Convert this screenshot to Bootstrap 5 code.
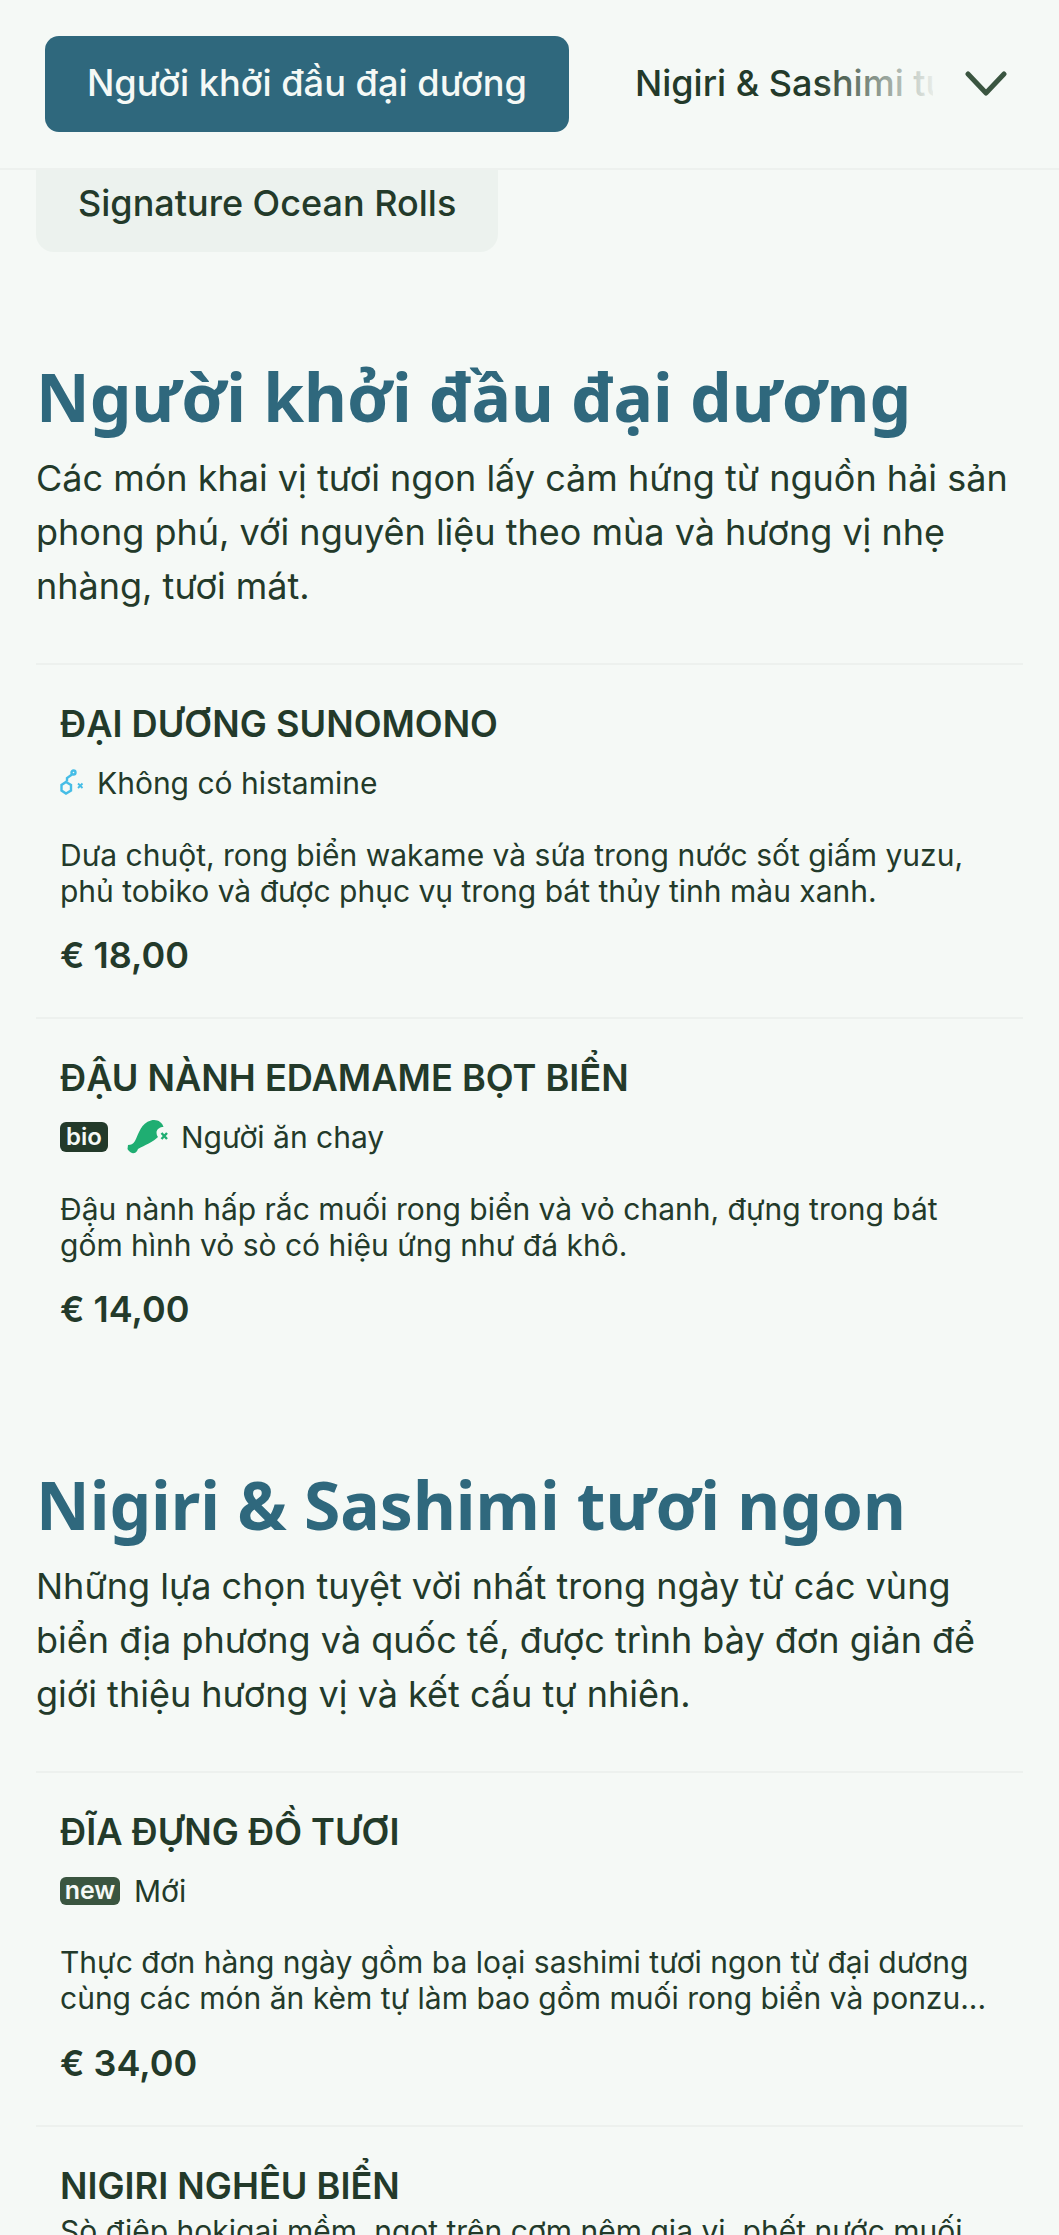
<!doctype html>
<html lang="vi">
<head>
<meta charset="utf-8">
<meta name="viewport" content="width=device-width, initial-scale=1">
<link href="https://cdn.jsdelivr.net/npm/bootstrap@5.3.0/dist/css/bootstrap.min.css" rel="stylesheet">
<style>
html,body{height:100%;overflow:hidden}
body{background:#f5f9f6;color:#233a2a;font-family:Inter,"Noto Sans",sans-serif}
.topbar{height:170px;border-bottom:2px solid #edf1ee;padding:36px 0 0 45px}
.tab-on{background:#2f687d;color:#f5f9f6;border:0;border-radius:14px;height:96px;width:524px;font-size:36.2px;font-weight:500;padding:0 0 2px;white-space:nowrap;flex:none}
.tab-wrap{width:298px;overflow:hidden;white-space:nowrap;font-size:36px;font-weight:500;line-height:94px;margin-left:66px;flex:none}
.tab-fade{top:36px;left:815px;width:120px;height:96px;background:linear-gradient(90deg,rgba(245,249,246,0),rgba(245,249,246,.95))}
.chev{margin-left:32px;margin-top:34px;flex:none}
.tab-off{background:#ecf2ee;width:462px;height:82px;margin-left:36px;border-radius:0 0 18px 18px;font-size:36px;font-weight:500;line-height:66px;padding-left:42px}
.sect{padding:0 36px}
.sect-first{margin-top:96px}
.sect-title{font-family:"Noto Sans",sans-serif;font-weight:700;font-size:66px;line-height:96px;color:#2f687d;margin:0 0 7px}
.sect-text{font-size:36px;line-height:54px;margin:0 0 50px}
.dish{border-top:2px solid #edf1ee;padding:37px 24px 0}
.dish-name{font-size:36.2px;font-weight:600;line-height:44px;margin:0;text-transform:uppercase}
.tags{height:40px;margin-top:17px;font-size:30px;line-height:40px}
.tag-dark{background:#233a2a;color:#f5f9f6;font-size:24px;font-weight:600;line-height:29px;border-radius:6px;padding:0 6px;height:30px}
.tag-new{background:#3a5540;height:28px;line-height:27px;width:60px;text-align:center;padding:0;margin-right:14px;font-size:25px}
.dish-text{font-size:30px;line-height:36px;margin:33.5px 0 0}
.dish-text-plain{margin-top:5px}
.price{font-size:36px;font-weight:600;line-height:44px;margin:24.5px 0 40px}
.sect-next{margin-top:124.5px}
.ico-hist{margin-right:13px}
.ico-veg{margin:0 12px 0 19px}
</style>
</head>
<body>
<div class="topbar d-flex align-items-start position-relative">
  <button class="tab-on" type="button">Người khởi đầu đại dương</button>
  <div class="tab-wrap">Nigiri &amp; Sashimi tươi ngon</div>
  <svg class="chev" width="42" height="28" viewBox="0 0 42 28" fill="none" stroke="#3a5540" stroke-width="5" stroke-linecap="round" stroke-linejoin="round"><path d="M3 4 21 23 39 4"/></svg>
  <div class="tab-fade position-absolute"></div>
</div>
<div class="tab-off">Signature Ocean Rolls</div>

<section class="sect sect-first">
  <h2 class="sect-title">Người khởi đầu đại dương</h2>
  <p class="sect-text">Các món khai vị tươi ngon lấy cảm hứng từ nguồn hải sản phong phú, với nguyên liệu theo mùa và hương vị nhẹ nhàng, tươi mát.</p>

  <article class="dish">
    <h3 class="dish-name">Đại dương Sunomono</h3>
    <div class="tags d-flex align-items-center">
      <svg class="ico-hist" width="24" height="28" viewBox="0 0 24 28" fill="none" stroke="#45bde6" stroke-width="2.4"><path d="M6 13 11 16V21.5L6 24.5 1.5 21.5V16Z"/><path d="M7 12.5V9L12 5.5"/><circle cx="13.5" cy="3.5" r="2"/><path d="M18 14.5 22.5 19M22.5 14.5 18 19" stroke-width="1.8"/></svg>
      <span>Không có histamine</span>
    </div>
    <p class="dish-text">Dưa chuột, rong biển wakame và sứa trong nước sốt giấm yuzu, phủ tobiko và được phục vụ trong bát thủy tinh màu xanh.</p>
    <p class="price">€ 18,00</p>
  </article>

  <article class="dish">
    <h3 class="dish-name">Đậu nành Edamame bọt biển</h3>
    <div class="tags d-flex align-items-center">
      <span class="tag-dark d-inline-block">bio</span>
      <svg class="ico-veg" width="42" height="38" viewBox="0 0 42 38" fill="#1fae72"><path d="M1 27C4 27 6 26 8 23 12 15 14 5 24 2.5 30 1 35 4 36.5 9 33 9 30 11 29.5 14 29.5 16 30 18 31 19 26 24 18 27 11 31 10 35 6 36 4 34.5 3 34 1 32 .5 31Z"/><path d="M34.5 15 40 21M40 15 34.5 21" stroke="#1fae72" stroke-width="2.4" fill="none"/></svg>
      <span>Người ăn chay</span>
    </div>
    <p class="dish-text">Đậu nành hấp rắc muối rong biển và vỏ chanh, đựng trong bát gốm hình vỏ sò có hiệu ứng như đá khô.</p>
    <p class="price mb-0">€ 14,00</p>
  </article>
</section>

<section class="sect sect-next">
  <h2 class="sect-title">Nigiri &amp; Sashimi tươi ngon</h2>
  <p class="sect-text">Những lựa chọn tuyệt vời nhất trong ngày từ các vùng biển địa phương và quốc tế, được trình bày đơn giản để giới thiệu hương vị và kết cấu tự nhiên.</p>

  <article class="dish">
    <h3 class="dish-name">Đĩa đựng đồ tươi</h3>
    <div class="tags d-flex align-items-center">
      <span class="tag-dark tag-new d-inline-block">new</span>
      <span>Mới</span>
    </div>
    <p class="dish-text">Thực đơn hàng ngày gồm ba loại sashimi tươi ngon từ đại dương cùng các món ăn kèm tự làm bao gồm muối rong biển và ponzu...</p>
    <p class="price">€ 34,00</p>
  </article>

  <article class="dish">
    <h3 class="dish-name">Nigiri nghêu biển</h3>
    <p class="dish-text dish-text-plain">Sò điệp hokigai mềm, ngọt trên cơm nêm gia vị, phết nước muối</p>
  </article>
</section>
<script src="https://cdn.jsdelivr.net/npm/bootstrap@5.3.0/dist/js/bootstrap.bundle.min.js"></script>
</body>
</html>
